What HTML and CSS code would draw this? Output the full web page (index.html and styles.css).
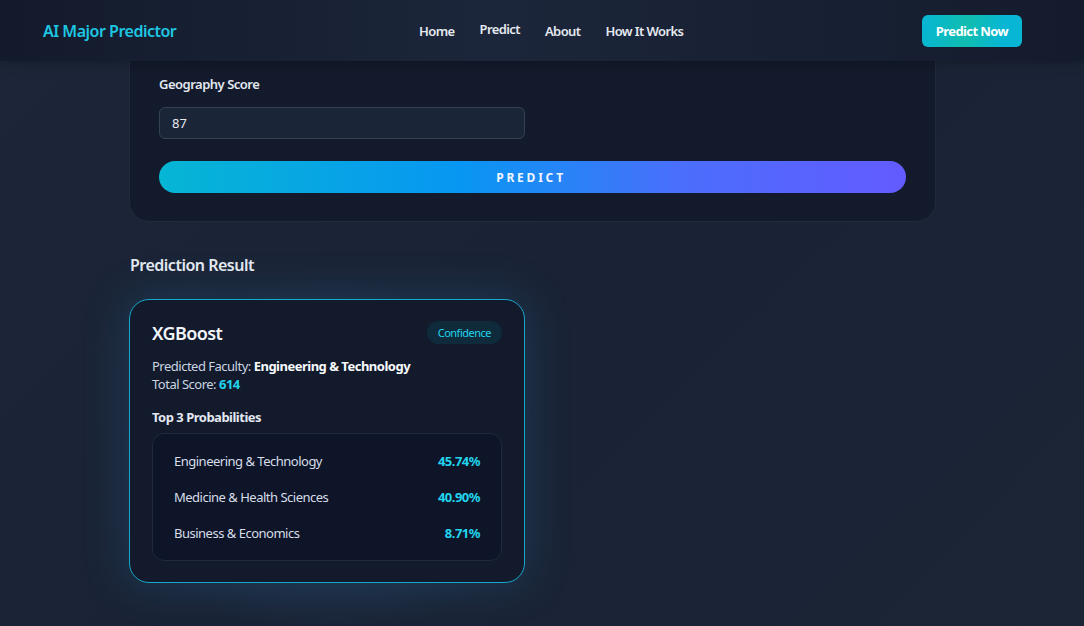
FILE: index.html
```html
<!DOCTYPE html>
<html lang="en">
<head>
<meta charset="utf-8">
<title>AI Major Predictor</title>
<link rel="stylesheet" href="styles.css">
</head>
<body>
<header class="navbar">
  <div class="brand">AI Major Predictor</div>
  <nav class="nav-links">
    <a class="nav-link">Home</a>
    <a class="nav-link active">Predict</a>
    <a class="nav-link">About</a>
    <a class="nav-link">How It Works</a>
  </nav>
  <a class="cta">Predict Now</a>
</header>
<main class="main">
  <section class="form-card">
    <label class="field-label">Geography Score</label>
    <div class="input">87</div>
    <button class="predict-btn">PREDICT</button>
  </section>

  <h2 class="section-title">Prediction Result</h2>

  <section class="result-card">
    <div class="result-head">
      <h3 class="model">XGBoost</h3>
      <span class="badge">Confidence</span>
    </div>
    <p class="line">Predicted Faculty: <strong>Engineering &amp; Technology</strong></p>
    <p class="line">Total Score: <strong class="accent">614</strong></p>
    <h4 class="sub">Top 3 Probabilities</h4>
    <div class="probs">
      <div class="prob-row"><span>Engineering &amp; Technology</span><span class="pct">45.74%</span></div>
      <div class="prob-row"><span>Medicine &amp; Health Sciences</span><span class="pct">40.90%</span></div>
      <div class="prob-row"><span>Business &amp; Economics</span><span class="pct">8.71%</span></div>
    </div>
  </section>
</main>
</body>
</html>
```
FILE: styles.css
```css
* { box-sizing: border-box; }
html, body { height: 100%; }
body {
  margin: 0;
  font-family: "Noto Sans", "Open Sans", sans-serif;
  color: #e2e8f0;
  background:
    radial-gradient(ellipse 300px 260px at 330px 460px, rgba(50,90,130,0.35), transparent 70%),
    linear-gradient(135deg, #1c2638 0%, #1a2336 50%, #1b2536 100%);
  overflow: hidden;
}
.navbar {
  height: 61px;
  display: flex;
  align-items: center;
  padding: 0 62px 0 43px;
  background: linear-gradient(90deg, #131a2c 0%, #1c263a 45%, #141b2d 100%);
  box-shadow: 0 2px 10px rgba(0,0,0,0.25);
  position: relative;
  z-index: 2;
}
.brand {
  font-size: 16px;
  font-weight: 600;
  color: #1ec6e2;
  width: 376px;
  letter-spacing: -0.5px;
}
.nav-links {
  display: flex;
  gap: 25px;
  flex: 1;
  align-items: center;
}
.nav-link {
  font-size: 13px;
  font-weight: 600;
  color: #e5e9f0;
  letter-spacing: -0.6px;
}
.nav-link.active { position: relative; top: -2px; }
.cta {
  height: 32px;
  padding: 0 14px;
  display: flex;
  align-items: center;
  border-radius: 6px;
  font-size: 13px;
  font-weight: 700;
  color: #fff;
  letter-spacing: -0.6px;
  background: linear-gradient(100deg, #06b6d4 0%, #10bdb0 45%, #06b6d4 80%, #06b6d4 100%);
}
.main {
  padding: 0 0 0 129px;
}
.form-card {
  width: 807px;
  background: #131a2b;
  border: 1px solid #1f2a3d;
  border-top: 0;
  border-radius: 0 0 20px 20px;
  padding: 14px 29px 28px 29px;
  display: flex;
  flex-direction: column;
}
.field-label {
  font-size: 13px;
  font-weight: 600;
  color: #e2e8f0;
  height: 18px;
  letter-spacing: -0.5px;
}
.input {
  margin-top: 14px;
  width: 366px;
  height: 32px;
  border: 1px solid #334155;
  border-radius: 6px;
  background: #1b2538;
  font-size: 13px;
  color: #e5e9f0;
  display: flex;
  align-items: center;
  padding-left: 12px;
}
.predict-btn {
  margin-top: 22px;
  height: 32px;
  border: 0;
  border-radius: 16px;
  background: linear-gradient(90deg, #06b6d4 0%, #0797f2 40%, #4b6efc 70%, #635bff 100%);
  color: #f1f5ff;
  font-family: "Noto Sans", sans-serif;
  font-weight: 700;
  font-size: 12px;
  letter-spacing: 2.8px;
  padding-left: 3px;
}
.section-title {
  margin: 32px 0 0 1px;
  font-size: 16px;
  font-weight: 600;
  color: #e2e8f0;
  letter-spacing: -0.5px;
  line-height: 22px;
}
.result-card {
  margin-top: 23px;
  width: 396px;
  height: 284px;
  border: 1px solid #14a9c8;
  border-radius: 20px;
  background: #121a2c;
  padding: 19px 22px 0 22px;
  box-shadow: 0 0 45px rgba(40,130,180,0.25);
}
.result-head {
  display: flex;
  justify-content: space-between;
  align-items: center;
  height: 27px;
}
.model {
  margin: 0;
  font-size: 18px;
  font-weight: 600;
  color: #f1f5f9;
  letter-spacing: -0.6px;
}
.badge {
  font-size: 11px;
  color: #22d3ee;
  background: #0f2a3a;
  border-radius: 12px;
  padding: 3px 11px;
  height: 23px;
  display: flex;
  align-items: center;
  letter-spacing: -0.5px;
}
.line {
  margin: 0;
  font-size: 13px;
  line-height: 18px;
  color: #cbd5e1;
  letter-spacing: -0.5px;
}
.result-head + .line { margin-top: 11px; }
.line strong { color: #f8fafc; font-weight: 700; }
.line strong.accent { color: #22d3ee; }
.sub {
  margin: 15px 0 0 0;
  font-size: 13px;
  font-weight: 700;
  color: #e2e8f0;
  letter-spacing: -0.5px;
  line-height: 18px;
}
.probs {
  margin-top: 7px;
  border: 1px solid #1f2a3d;
  border-radius: 12px;
  background: #0e1528;
  padding: 9px 21px 9px 21px;
}
.prob-row {
  height: 36px;
  display: flex;
  justify-content: space-between;
  align-items: center;
  font-size: 13px;
  color: #d6dde8;
  letter-spacing: -0.5px;
}
.pct { color: #22d3ee; font-weight: 700; }
```
